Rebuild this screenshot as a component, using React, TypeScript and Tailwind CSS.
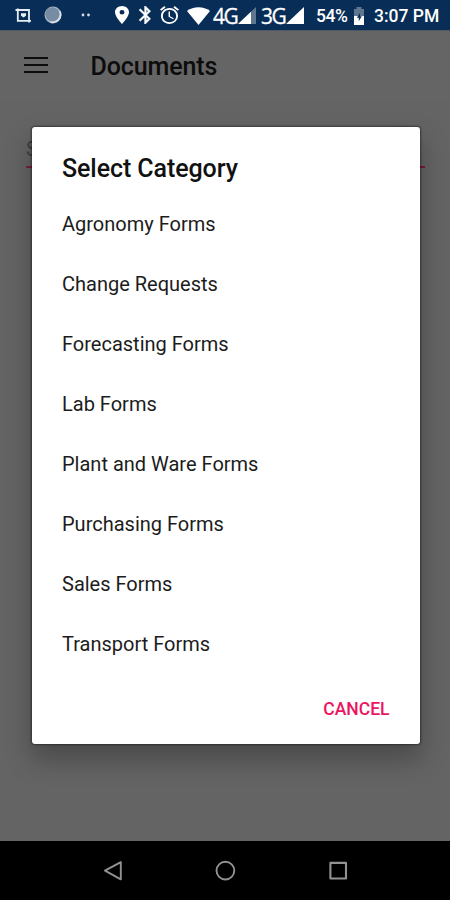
import { useState } from 'react';

const categories = [
    'Agronomy Forms',
    'Change Requests',
    'Forecasting Forms',
    'Lab Forms',
    'Plant and Ware Forms',
    'Purchasing Forms',
    'Sales Forms',
    'Transport Forms',
];

function StatusBar() {
    return (
        <div className="flex h-[30px] items-center bg-[#082d56] pl-[15px] text-white">
            <svg className="h-[18px] w-4 shrink-0" viewBox="0 0 16 18" fill="none" stroke="#e8edf3" strokeWidth="1.8">
                <path d="M2.8 2.5v12.3H16M.5 4H14v12.5" />
                <path d="M6 7.3h5v2.4l-2.5 1.8L6 9.7z" fill="#e8edf3" stroke="none" />
            </svg>
            <svg className="ml-[13px] h-[18px] w-[18px] shrink-0" viewBox="0 0 18 18">
                <circle cx="9" cy="9" r="8.5" fill="#a9b8c6" />
                <circle cx="8.3" cy="8.3" r="7" fill="#768ca2" />
                <path d="M16 5.5A8 8 0 0 1 7 16.3" fill="none" stroke="#dde4ea" strokeWidth="1.5" strokeLinecap="round" />
            </svg>
            <svg className="ml-[19px] h-[4px] w-[10px] shrink-0" viewBox="0 0 10 4" fill="#d5dde6">
                <circle cx="2" cy="2" r="1.4" />
                <circle cx="7.5" cy="2" r="1.4" />
            </svg>
            <svg className="ml-[24px] h-[18px] w-[14px] shrink-0" viewBox="5 2 14 20" preserveAspectRatio="none" fill="white">
                <path d="M12 2C8.13 2 5 5.13 5 9c0 5.25 7 13 7 13s7-7.75 7-13c0-3.87-3.13-7-7-7zm0 9.5a2.5 2.5 0 0 1 0-5 2.5 2.5 0 0 1 0 5z" />
            </svg>
            <svg className="ml-[10px] h-[18px] w-[12px] shrink-0" viewBox="5 2 13 20" preserveAspectRatio="none" fill="white" stroke="white" strokeWidth=".4">
                <path d="M17.71 7.71 12 2h-1v7.59L6.41 5 5 6.41 10.59 12 5 17.59 6.41 19 11 14.41V22h1l5.71-5.71-4.3-4.29 4.3-4.29zM13 5.83l1.88 1.88L13 9.59V5.83zm1.88 10.46L13 18.17v-3.76l1.88 1.88z" />
            </svg>
            <svg className="ml-[9px] h-[18px] w-[19px] shrink-0" viewBox="2 1.8 20 20.3" preserveAspectRatio="none" fill="white">
                <path d="m22 5.72-4.6-3.86-1.29 1.53 4.6 3.86L22 5.72zM7.88 3.39 6.6 1.86 2 5.71l1.29 1.53 4.59-3.85zM12.5 8H11v6l4.75 2.85.75-1.23-4-2.37V8zM12 4c-4.97 0-9 4.03-9 9s4.02 9 9 9a9 9 0 0 0 0-18zm0 16c-3.87 0-7-3.13-7-7s3.13-7 7-7 7 3.13 7 7-3.13 7-7 7z" />
            </svg>
            <svg className="mt-px ml-[8px] h-[18px] w-[23px] shrink-0" viewBox="0 0 23 18" fill="white">
                <path d="M11.5 18 0 4Q5 .3 11.5.3T23 4z" />
            </svg>
            <span className="mt-[2px] ml-[3px] w-[25px] font-['Open_Sans',sans-serif] text-[21px] leading-[28px] tracking-[-1.5px] [-webkit-text-stroke:0.3px_white]">4G</span>
            <Signal weak />
            <span className="mt-[2px] ml-[5px] w-[25px] font-['Open_Sans',sans-serif] text-[21px] leading-[28px] tracking-[-1.5px] [-webkit-text-stroke:0.3px_white]">3G</span>
            <Signal />
            <span className="mt-[2px] ml-[12px] w-[33px] text-[17.5px] leading-[28px] font-medium tracking-[-0.5px]">54%</span>
            <svg className="mt-px ml-[4px] h-[18px] w-[12px] shrink-0" viewBox="0 0 12 18">
                <path d="M1 2h2.5V0h5v2H11v7H1z" fill="#60768f" />
                <path d="M1 9h10v9H1z" fill="white" />
                <path d="M7 6 3.8 10.8h2v3.4l3-4.9H7z" fill="#082d56" />
            </svg>
            <span className="mt-[2px] ml-[9px] text-[17.5px] leading-[28px] font-medium whitespace-nowrap">3:07 PM</span>
        </div>
    );
}

function Signal({ weak = false }: { weak?: boolean }) {
    return (
        <svg className="mt-px h-[17px] w-[18px] shrink-0" viewBox="0 0 18 17">
            <path d="M18 0v17H0z" fill={weak ? '#5f7892' : 'white'} />
            {weak && <path d="M13 4.7V17H0z" fill="white" />}
        </svg>
    );
}

function NavBar() {
    return (
        <nav className="flex h-[59px] items-center justify-center bg-black">
            <button aria-label="Back" className="flex w-[112.5px] justify-center">
                <svg className="h-[22px] w-[22px]" viewBox="0 0 22 22" fill="none" stroke="#929292" strokeWidth="1.9" strokeLinejoin="round">
                    <path d="M18.8 2.1v17.2L3 10.7z" />
                </svg>
            </button>
            <button aria-label="Home" className="flex w-[112.5px] justify-center">
                <svg className="h-[22px] w-[22px]" viewBox="0 0 22 22" fill="none" stroke="#929292" strokeWidth="1.9">
                    <circle cx="11.4" cy="10.6" r="8.9" />
                </svg>
            </button>
            <button aria-label="Recents" className="flex w-[112.5px] justify-center">
                <svg className="h-[22px] w-[22px]" viewBox="0 0 22 22" fill="none" stroke="#929292" strokeWidth="2.1" strokeLinejoin="round">
                    <rect x="3.4" y="2.9" width="15.6" height="15.6" />
                </svg>
            </button>
        </nav>
    );
}

export default function App() {
    const [open, setOpen] = useState(true);

    return (
        <div className="flex h-[900px] w-[450px] flex-col overflow-hidden bg-[#646464] font-[Roboto,sans-serif]">
            <StatusBar />
            <div className="relative flex-1">
                <header className="flex h-[70px] items-center border-t border-[#4f5963] bg-[#656565] pl-[23.5px] text-[#0c0c0c]">
                    <button aria-label="Menu" className="-mt-[2px] flex w-6 flex-col gap-[5px]">
                        <span className="h-[2px] bg-[#0c0c0c]" />
                        <span className="h-[2px] bg-[#0c0c0c]" />
                        <span className="h-[2px] bg-[#0c0c0c]" />
                    </button>
                    <h1 className="mt-[3px] ml-[43px] text-[25px] font-medium tracking-[-0.1px]">Documents</h1>
                </header>
                <div className="ml-[26px] mr-[25px] mt-[35px] h-[33px] border-b-2 border-[#7c1d3d] text-[20px] leading-[29px] text-[#404040]">
                    S
                </div>

                {open && (
                    <div
                        role="dialog"
                        className="absolute top-[97px] left-[31.5px] w-[388px] rounded-[3px] bg-white shadow-[0_0_2px_1px_rgba(0,0,0,0.4),0_14px_26px_2px_rgba(0,0,0,0.26)]"
                    >
                        <h2 className="h-[67px] px-[30.5px] pt-[27px] text-[25px] leading-[30px] font-medium tracking-[-0.08px] text-[#111]">Select Category</h2>
                        <ul>
                            {categories.map((name) => (
                                <li key={name} className="flex h-[60px] items-center px-[30.5px] text-[20px] text-[#1c1c1c]">
                                    {name}
                                </li>
                            ))}
                        </ul>
                        <div className="flex h-[70px] items-center justify-end pt-px pr-[30px]">
                            <button onClick={() => setOpen(false)} className="text-[17.5px] font-medium text-[#ec1561]">
                                CANCEL
                            </button>
                        </div>
                    </div>
                )}
            </div>
            <NavBar />
        </div>
    );
}
